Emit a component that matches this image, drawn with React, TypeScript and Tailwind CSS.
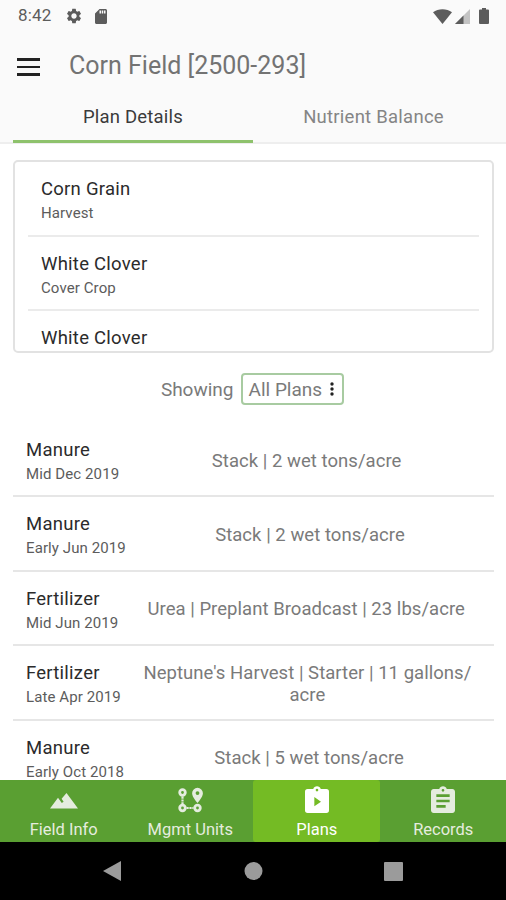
import type { ReactNode } from "react";
import { MdAssignment, MdSdCard, MdSettings } from "react-icons/md";

const crops = [
  { name: "Corn Grain", type: "Harvest" },
  { name: "White Clover", type: "Cover Crop" },
  { name: "White Clover" },
];

const plans = [
  { name: "Manure", date: "Mid Dec 2019", detail: "Stack | 2 wet tons/acre" },
  { name: "Manure", date: "Early Jun 2019", detail: "Stack | 2 wet tons/acre" },
  { name: "Fertilizer", date: "Mid Jun 2019", detail: "Urea | Preplant Broadcast | 23 lbs/acre" },
  { name: "Fertilizer", date: "Late Apr 2019", detail: "Neptune's Harvest | Starter | 11 gallons/acre" },
  { name: "Manure", date: "Early Oct 2018", detail: "Stack | 5 wet tons/acre" },
];

function StatusBar() {
  return (
    <div className="flex h-8 shrink-0 items-center pl-[18px] pr-[17px] text-[#5c5c5c]">
      <span className="text-[17px] tracking-[0.2px]">8:42</span>
      <MdSettings className="ml-[13px] h-[18px] w-[18px]" />
      <MdSdCard className="ml-[9px] h-[19px] w-[18px]" />
      <div className="ml-auto flex items-center">
        <svg className="h-[15px] w-[19px]" viewBox="0 0 19 15" fill="currentColor">
          <path d="M0 3.2C5.2-.9 13.8-.9 19 3.2L9.5 15z" />
        </svg>
        <svg className="ml-[3px] h-[15px] w-[15px]" viewBox="0 0 15 15" fill="currentColor">
          <path d="M15 0v15H0z" opacity="0.35" />
          <path d="M8.5 6.5V15H0z" />
        </svg>
        <svg className="ml-[9px] h-4 w-[10px]" viewBox="0 0 10 16" fill="currentColor">
          <path d="M3 0h4v1.6h2a1 1 0 0 1 1 1V15a1 1 0 0 1-1 1H1a1 1 0 0 1-1-1V2.6a1 1 0 0 1 1-1h2z" />
        </svg>
      </div>
    </div>
  );
}

function Header() {
  return (
    <header className="flex h-[66px] shrink-0 items-center pl-[17px] pt-[2px]">
      <button className="flex w-[23px] flex-col gap-[5px] pt-[2px]" aria-label="Menu">
        <span className="h-[2.5px] w-full bg-[#222]" />
        <span className="h-[2.5px] w-full bg-[#222]" />
        <span className="h-[2.5px] w-full bg-[#222]" />
      </button>
      <h1 className="ml-[29px] text-[25px] font-normal text-[#737373]">Corn Field [2500-293]</h1>
    </header>
  );
}

function Tabs() {
  return (
    <div className="flex h-[46px] shrink-0 border-b-2 border-[#eeeeee] px-[13px] text-[18.5px]">
      <button className="-mb-[1px] w-1/2 border-b-[3px] border-[#8ec26c] pb-[2px] tracking-[0.2px] text-[#3a3a3a]">
        Plan Details
      </button>
      <button className="w-1/2 pb-[4px] pl-px tracking-[0.25px] text-[#858585]">Nutrient Balance</button>
    </div>
  );
}

function Label({ title, sub }: { title: string; sub?: string }) {
  return (
    <div className="shrink-0 pt-[14px]">
      <div className="text-[18.5px] leading-[26px] tracking-[0.25px] text-[#2b2b2b]">{title}</div>
      {sub && <div className="text-[15px] leading-[22px] tracking-[0.1px] text-[#5c5c5c]">{sub}</div>}
    </div>
  );
}

function UnitsIcon() {
  return (
    <svg className="h-7 w-7" viewBox="0 0 28 28" fill="none" stroke="currentColor">
      <circle cx="6.5" cy="5.5" r="2.8" strokeWidth="2.8" />
      <circle cx="6.5" cy="21" r="2.8" strokeWidth="2.8" />
      <circle cx="21.5" cy="21" r="2.8" strokeWidth="2.8" />
      <path d="M6.500 9.500v8M10.500 21h7" strokeWidth="2.2" strokeDasharray="2.2 0.7" />
      <path
        d="M21.500.8a5.400 5.400 0 0 0-5.400 5.400c0 3.900 5.400 9.800 5.400 9.800s5.400-5.900 5.400-9.800A5.400 5.400 0 0 0 21.500.8zm0 3.400a1.900 1.900 0 1 1 0 3.800 1.900 1.900 0 0 1 0-3.800z"
        fill="currentColor"
        fillRule="evenodd"
        stroke="none"
      />
    </svg>
  );
}

function TerrainIcon() {
  return (
    <svg className="h-7 w-7" viewBox="0 0 28 28" fill="currentColor">
      <path d="M0 21.5 8 10.8l3.800 5.200 1.800-1.200-2-3L16.500 6 28 21.500z" />
    </svg>
  );
}

function PlansIcon() {
  return (
    <svg className="h-8 w-8" viewBox="0 0 24 24" fill="currentColor" fillRule="evenodd">
      <path d="M19 3h-4.180C14.400 1.840 13.300 1 12 1s-2.400.840-2.820 2H5a2 2 0 0 0-2 2v14a2 2 0 0 0 2 2h14a2 2 0 0 0 2-2V5a2 2 0 0 0-2-2zm-7-.200a1 1 0 1 1 0 2 1 1 0 0 1 0-2zM10 9l5 3.500-5 3.500z" />
    </svg>
  );
}

function NavItem({ label, icon, active }: { label: string; icon: ReactNode; active?: boolean }) {
  return (
    <button
      className={
        active
          ? "flex flex-1 flex-col items-center rounded-[3px] bg-[#74bb24] pl-px text-white"
          : "flex flex-1 flex-col items-center pl-px text-[#e5ecdf]"
      }
    >
      <span className="flex h-[39px] items-center pt-[3px]">{icon}</span>
      <span className="text-[16.5px] leading-[22px]">{label}</span>
    </button>
  );
}

export default function App() {
  return (
    <div className="flex h-[900px] w-[506px] flex-col overflow-hidden bg-white font-[Roboto,sans-serif]">
      <div className="flex shrink-0 flex-col bg-[#fafafa]">
        <StatusBar />
        <Header />
        <Tabs />
      </div>

      <main className="flex min-h-0 flex-1 flex-col overflow-hidden pl-[13px] pr-[12px]">
        <section className="mt-4 h-[193px] shrink-0 overflow-hidden rounded-[5px] border-2 border-[#e2e2e2] px-[13px]">
          {crops.map((crop, i) => (
            <div key={i} className="flex h-[74.5px] items-start border-b-2 border-[#ebebeb] pl-[13px]">
              <Label title={crop.name} sub={crop.type} />
            </div>
          ))}
        </section>

        <div className="mt-5 flex h-8 shrink-0 items-center justify-center pr-[2px] text-[19px] text-[#7a7a7a]">
          <span className="pt-[2px]">Showing</span>
          <button className="ml-[7px] flex h-8 items-center rounded-[4px] border-2 border-[#a8cba1] pl-[6px] pr-[8px]">
            <span className="pt-[2px]">All Plans</span>
            <svg className="ml-[8px] h-[14px] w-[4px]" viewBox="0 0 4 14" fill="#222">
              <circle cx="2" cy="2" r="1.7" />
              <circle cx="2" cy="7" r="1.7" />
              <circle cx="2" cy="12" r="1.7" />
            </svg>
          </button>
        </div>

        <section className="mt-[18px] shrink-0">
          {plans.map((plan) => (
            <div key={plan.date} className="flex h-[74.4px] items-start border-b-2 border-[#e6e6e6] pl-[13px]">
              <Label title={plan.name} sub={plan.date} />
              <p className="flex-1 self-center px-3 pt-[3px] text-center text-[18.5px] leading-[22px] tracking-[0.04px] text-[#7a7a7a]">
                {plan.detail.split("/")[0]}/<wbr />
                {plan.detail.split("/")[1]}
              </p>
            </div>
          ))}
        </section>
      </main>

      <nav className="flex h-[62px] shrink-0 bg-[#5a9f32]">
        <NavItem label="Field Info" icon={<TerrainIcon />} />
        <NavItem label="Mgmt Units" icon={<UnitsIcon />} />
        <NavItem label="Plans" icon={<PlansIcon />} active />
        <NavItem label="Records" icon={<MdAssignment className="h-8 w-8" />} />
      </nav>

      {/* System buttons */}
      <div className="flex h-[58px] shrink-0 items-center justify-center bg-black text-[#9b9b9b]">
        <svg className="h-6 w-[300px]" viewBox="0 0 300 24" fill="currentColor">
          <path d="M0 12 18 2v20z" />
          <circle cx="150.500" cy="12" r="9" />
          <rect x="281" y="3" width="19" height="19" rx="1" />
        </svg>
      </div>
    </div>
  );
}
